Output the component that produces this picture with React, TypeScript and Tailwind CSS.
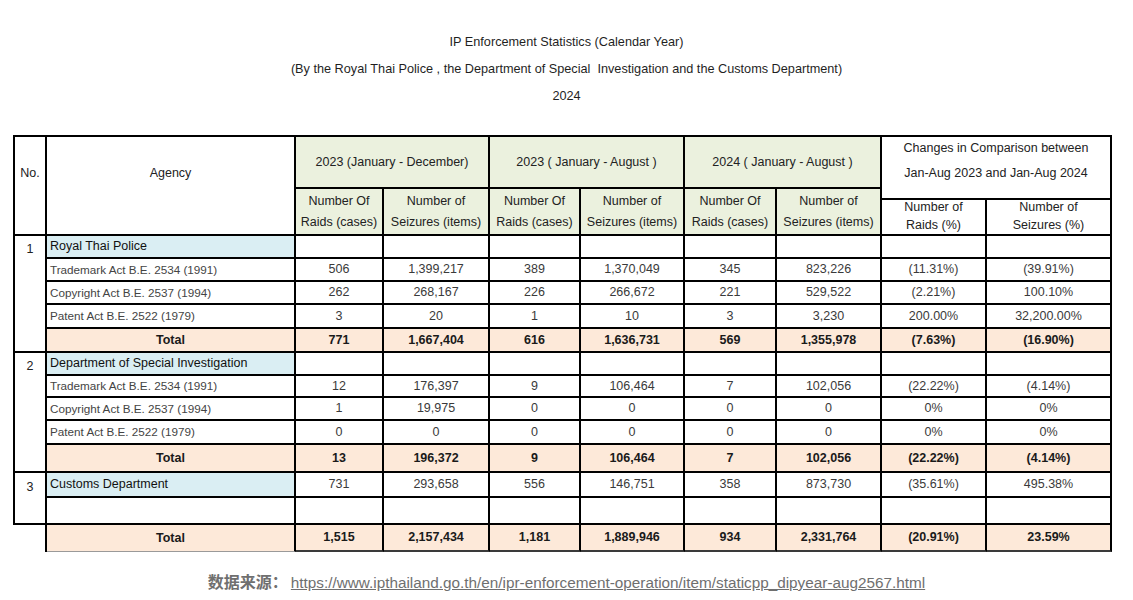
import React from 'react'

type Row = { name: string; v: string[] }

const groups: { no: string; title: string; rows: Row[]; total?: string[] }[] = [
  {
    no: '1',
    title: 'Royal Thai Police',
    rows: [
      { name: 'Trademark Act B.E. 2534 (1991)', v: ['506', '1,399,217', '389', '1,370,049', '345', '823,226', '(11.31%)', '(39.91%)'] },
      { name: 'Copyright Act B.E. 2537 (1994)', v: ['262', '268,167', '226', '266,672', '221', '529,522', '(2.21%)', '100.10%'] },
      { name: 'Patent Act B.E. 2522 (1979)', v: ['3', '20', '1', '10', '3', '3,230', '200.00%', '32,200.00%'] },
    ],
    total: ['771', '1,667,404', '616', '1,636,731', '569', '1,355,978', '(7.63%)', '(16.90%)'],
  },
  {
    no: '2',
    title: 'Department of Special Investigation',
    rows: [
      { name: 'Trademark Act B.E. 2534 (1991)', v: ['12', '176,397', '9', '106,464', '7', '102,056', '(22.22%)', '(4.14%)'] },
      { name: 'Copyright Act B.E. 2537 (1994)', v: ['1', '19,975', '0', '0', '0', '0', '0%', '0%'] },
      { name: 'Patent Act B.E. 2522 (1979)', v: ['0', '0', '0', '0', '0', '0', '0%', '0%'] },
    ],
    total: ['13', '196,372', '9', '106,464', '7', '102,056', '(22.22%)', '(4.14%)'],
  },
]

const customs = ['731', '293,658', '556', '146,751', '358', '873,730', '(35.61%)', '495.38%']
const grand = ['1,515', '2,157,434', '1,181', '1,889,946', '934', '2,331,764', '(20.91%)', '23.59%']

const cell = 'border-r-2 border-b-2 border-black flex items-center justify-center'

const Cells = ({ values, bold }: { values: string[]; bold?: boolean }) => (
  <>
    {values.map((x, i) => (
      <div key={i} className={`${cell} ${bold ? 'bg-[#fde9d9] font-bold text-[#1a1a1a]' : 'text-[#3a3a3a]'}`}>
        {x}
      </div>
    ))}
  </>
)

const Blank = () => (
  <>
    {Array.from({ length: 8 }).map((_, i) => (
      <div key={i} className={cell} />
    ))}
  </>
)

const subHeads = [
  ['Number Of', 'Raids (cases)'],
  ['Number of', 'Seizures (items)'],
  ['Number Of', 'Raids (cases)'],
  ['Number of', 'Seizures (items)'],
  ['Number Of', 'Raids (cases)'],
  ['Number of', 'Seizures (items)'],
]
const subStart = ['col-start-3', 'col-start-4', 'col-start-5', 'col-start-6', 'col-start-7', 'col-start-8']

export default function App() {
  return (
    <div className="w-[1133px] h-[600px] bg-white text-[#222] font-['Liberation_Sans',Arial,sans-serif] text-[12.5px] overflow-hidden">
      <div className="pt-[29px] text-center text-[12.7px] leading-[27px] text-[#1f1f1f]">
        <div>IP Enforcement Statistics (Calendar Year)</div>
        <div>(By the Royal Thai Police , the Department of Special&nbsp; Investigation and the Customs Department)</div>
        <div>2024</div>
      </div>

      <div className="mt-[25px] ml-[13px] w-fit">
        <div className="grid grid-cols-[32px_249px_88px_106px_91px_104px_92px_105px_105px_125px] grid-rows-[52px_11px_36px_23px_23px_23px_24px_24px_23px_22px_23px_24px_28px_25px_27px] border-l-2 border-t-2 border-black">
          <div className="col-start-1 row-start-1 row-span-3 border-r-2 border-b-2 border-black flex justify-center pt-[27px]">No.</div>
          <div className="col-start-2 row-start-1 row-span-3 border-r-2 border-b-2 border-black flex justify-center pt-[27px]">Agency</div>
          <div className={`col-start-3 row-start-1 col-span-2 bg-[#ebf1de] ${cell}`}>2023 (January - December)</div>
          <div className={`col-start-5 row-start-1 col-span-2 bg-[#ebf1de] ${cell}`}>2023 ( January - August )</div>
          <div className={`col-start-7 row-start-1 col-span-2 bg-[#ebf1de] ${cell}`}>2024 ( January - August )</div>
          <div className={`col-start-9 row-start-1 col-span-2 row-span-2 ${cell} flex-col leading-[25px] pb-[14px]`}>
            <span>Changes in Comparison between</span>
            <span>Jan-Aug 2023 and Jan-Aug 2024</span>
          </div>
          {subHeads.map((h, i) => (
            <div key={i} className={`${subStart[i]} row-start-2 row-span-2 bg-[#ebf1de] border-r-2 border-b-2 border-black flex flex-col items-center justify-end pb-[1px] leading-[21px]`}>
              <span>{h[0]}</span>
              <span>{h[1]}</span>
            </div>
          ))}
          <div className="col-start-9 row-start-3 border-r-2 border-b-2 border-black flex flex-col items-center justify-end leading-[18px]">
            <span>Number of</span>
            <span>Raids (%)</span>
          </div>
          <div className="col-start-10 row-start-3 border-r-2 border-b-2 border-black flex flex-col items-center justify-end leading-[18px]">
            <span>Number of</span>
            <span>Seizures (%)</span>
          </div>

          {groups.map((g) => (
            <React.Fragment key={g.no}>
              <div className="row-span-5 border-r-2 border-b-2 border-black flex justify-center pt-[4px]">{g.no}</div>
              <div className="border-r-2 border-b-2 border-black bg-[#daeef3] flex items-center pl-[3px] text-[#111]">{g.title}</div>
              <Blank />
              {g.rows.map((r) => (
                <React.Fragment key={r.name}>
                  <div className="border-r-2 border-b-2 border-black flex items-center pl-[3px] text-[11.7px] text-[#444]">{r.name}</div>
                  <Cells values={r.v} />
                </React.Fragment>
              ))}
              <div className={`${cell} bg-[#fde9d9] font-bold text-[#1a1a1a]`}>Total</div>
              <Cells values={g.total!} bold />
            </React.Fragment>
          ))}

          <div className="row-span-2 border-r-2 border-b-2 border-black flex justify-center pt-[5px]">3</div>
          <div className="border-r-2 border-b-2 border-black bg-[#daeef3] flex items-center pl-[3px] text-[#111]">Customs Department</div>
          <Cells values={customs} />
          <div className="border-r-2 border-b-2 border-black" />
          <Blank />
        </div>

        <div className="ml-[32px] grid grid-cols-[249px_88px_106px_91px_104px_92px_105px_105px_125px] h-[27px] border-l-2 border-black">
          <div className="border-r-2 border-b border-r-black border-b-[#9a9a9a] bg-[#fde9d9] flex items-center justify-center font-bold text-[#1a1a1a]">Total</div>
          {grand.map((x, i) => (
            <div key={i} className="border-r-2 border-b-2 border-r-black border-b-[#3a3a3a] bg-[#fde9d9] flex items-center justify-center font-bold text-[#1a1a1a]">
              {x}
            </div>
          ))}
        </div>
      </div>

      <div className="mt-[19px] flex justify-center items-baseline gap-[3px] leading-[20px] text-[#6f6f6f]">
        <span className="font-bold text-[16px] font-['Noto_Sans_CJK_SC',sans-serif]">数据来源：</span>
        <span className="underline text-[15.3px] font-['Liberation_Sans',Arial,sans-serif]">
          https://www.ipthailand.go.th/en/ipr-enforcement-operation/item/staticpp_dipyear-aug2567.html
        </span>
      </div>
    </div>
  )
}
